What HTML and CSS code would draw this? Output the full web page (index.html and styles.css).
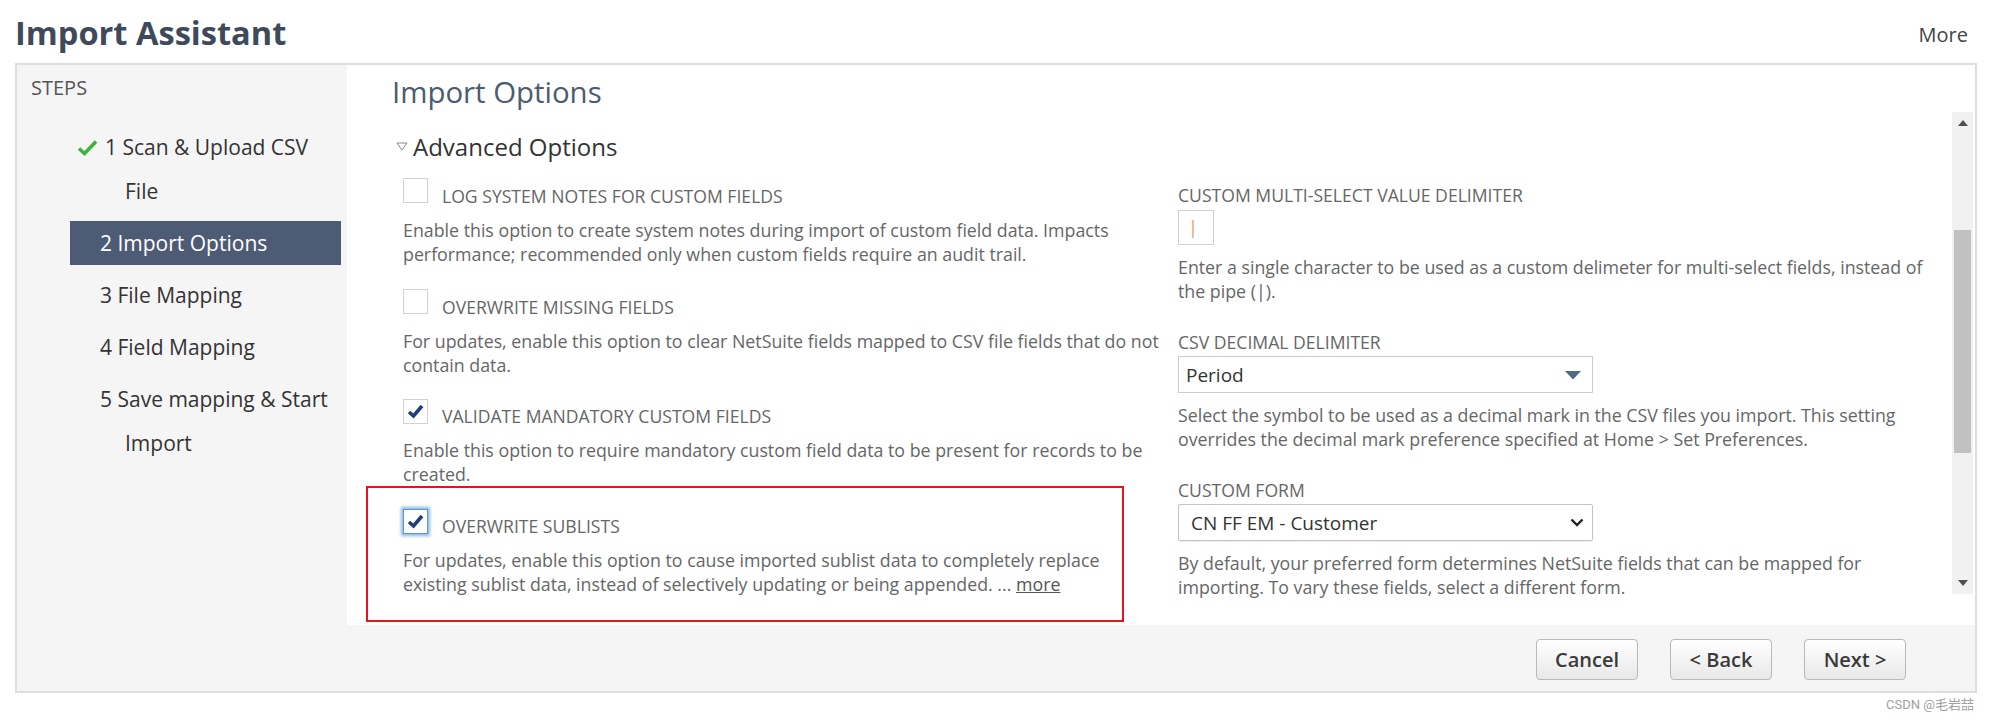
FILE: index.html
```html
<!DOCTYPE html>
<html lang="en">
<head>
<meta charset="utf-8">
<title>Import Assistant</title>
<link rel="stylesheet" href="styles.css">
</head>
<body>
<div class="header">
  <h1 class="title">Import Assistant</h1>
  <a class="more">More</a>
</div>
<div class="panel">
  <div class="panel-top">
    <aside class="sidebar">
      <div class="steps-title">STEPS</div>
      <ul class="steps">
        <li class="step"><svg class="step-check" width="21" height="17" viewBox="0 0 21 17"><path d="M2 9.5 L7.5 14.5 L19 2.5" fill="none" stroke="#3db43b" stroke-width="3.6"/></svg>1 Scan &amp; Upload CSV File</li>
        <li class="step active">2 Import Options</li>
        <li class="step">3 File Mapping</li>
        <li class="step">4 Field Mapping</li>
        <li class="step">5 Save mapping &amp; Start Import</li>
      </ul>
    </aside>
    <main class="main">
      <h2 class="page-heading">Import Options</h2>
      <div class="scroll-row">
        <div class="scroll-content">
          <div class="section-head"><svg class="tri" width="12" height="9" viewBox="0 0 12 9"><polygon points="1,1 11,1 6,8" fill="none" stroke="#8a8a8a" stroke-width="1"/></svg>Advanced Options</div>
          <div class="cols">
            <div class="col">
              <div class="opt">
                <div class="opt-row"><span class="cb"></span><span class="opt-label">LOG SYSTEM NOTES FOR CUSTOM FIELDS</span></div>
                <p class="desc">Enable this option to create system notes during import of custom field data. Impacts performance; recommended only when custom fields require an audit trail.</p>
              </div>
              <div class="opt">
                <div class="opt-row"><span class="cb"></span><span class="opt-label">OVERWRITE MISSING FIELDS</span></div>
                <p class="desc">For updates, enable this option to clear NetSuite fields mapped to CSV file fields that do not contain data.</p>
              </div>
              <div class="opt">
                <div class="opt-row"><span class="cb"><svg width="23" height="23" viewBox="0 0 23 23"><path d="M5 12 L9.5 16 L18 6" fill="none" stroke="#1f3f7c" stroke-width="3.6"/></svg></span><span class="opt-label">VALIDATE MANDATORY CUSTOM FIELDS</span></div>
                <p class="desc">Enable this option to require mandatory custom field data to be present for records to be created.</p>
              </div>
              <div class="opt">
                <div class="opt-row"><span class="cb cb-focus"><svg width="23" height="23" viewBox="0 0 23 23"><path d="M5 12 L9.5 16 L18 6" fill="none" stroke="#1f3f7c" stroke-width="3.6"/></svg></span><span class="opt-label">OVERWRITE SUBLISTS</span></div>
                <p class="desc">For updates, enable this option to cause imported sublist data to completely replace existing sublist data, instead of selectively updating or being appended. ... <a class="more-link">more</a></p>
              </div>
            </div>
            <div class="col col-right">
              <div class="field">
                <div class="field-label">CUSTOM MULTI-SELECT VALUE DELIMITER</div>
                <div class="text-input"><span class="pipe">|</span></div>
                <p class="desc">Enter a single character to be used as a custom delimeter for multi-select fields, instead of the pipe (|).</p>
              </div>
              <div class="field">
                <div class="field-label">CSV DECIMAL DELIMITER</div>
                <div class="select select-flat"><span>Period</span><svg width="18" height="10" viewBox="0 0 18 10"><path d="M1 1 L17 1 L9.5 9 Q9 9.5 8.5 9 Z" fill="#4e698b"/></svg></div>
                <p class="desc">Select the symbol to be used as a decimal mark in the CSV files you import. This setting overrides the decimal mark preference specified at Home &gt; Set Preferences.</p>
              </div>
              <div class="field">
                <div class="field-label">CUSTOM FORM</div>
                <div class="select select-native"><span>CN FF EM - Customer</span><svg width="14" height="9" viewBox="0 0 14 9"><path d="M1.5 1.5 L7 7 L12.5 1.5" fill="none" stroke="#222" stroke-width="2.4"/></svg></div>
                <p class="desc">By default, your preferred form determines NetSuite fields that can be mapped for importing. To vary these fields, select a different form.</p>
              </div>
            </div>
          </div>
        </div>
        <div class="scrollbar">
          <div class="sb-btn"><svg width="10" height="6" viewBox="0 0 10 6"><polygon points="0,6 10,6 5,0" fill="#505050"/></svg></div>
          <div class="sb-track"><div class="sb-thumb"></div></div>
          <div class="sb-btn"><svg width="10" height="6" viewBox="0 0 10 6"><polygon points="0,0 10,0 5,6" fill="#505050"/></svg></div>
        </div>
      </div>
    </main>
  </div>
  <div class="footer">
    <button class="btn">Cancel</button>
    <button class="btn">&lt; Back</button>
    <button class="btn">Next &gt;</button>
  </div>
  <div class="annot"></div>
</div>
<div class="watermark">CSDN @毛岩喆</div>
</body>
</html>
```
FILE: styles.css
```css
body {
  margin: 0;
  font-family: "Open Sans", "Noto Sans", sans-serif;
  background: #fff;
  color: #333;
}

.header {
  display: flex;
  justify-content: space-between;
  align-items: flex-start;
  height: 63px;
  padding: 11px 32px 0 15px;
  box-sizing: border-box;
}

.title {
  margin: 0;
  font-size: 32.6px;
  font-weight: 700;
  color: #3e4a5c;
  line-height: 44px;
}

.more {
  margin-top: 10px;
  font-size: 20px;
  color: #444;
}

.panel {
  position: relative;
  margin: 0 23px 0 15px;
  border: 2px solid #dedede;
  background: #f5f5f5;
}

.panel-top {
  display: flex;
  height: 560px;
}

.sidebar {
  width: 330px;
  flex: none;
  padding: 11px 0 0 14px;
  box-sizing: border-box;
}

.steps-title {
  font-size: 20px;
  color: #555;
  line-height: 24px;
}

.steps {
  list-style: none;
  margin: 25px 0 0 39px;
  padding: 0;
}

.step {
  width: 271px;
  box-sizing: border-box;
  padding: 0 6px 0 55px;
  text-indent: -25px;
  font-size: 21px;
  line-height: 44px;
  color: #333;
  margin-bottom: 8px;
}

.step.active {
  background: #4d5b75;
  color: #fff;
}

.step-check {
  margin-left: -23px;
  margin-right: 7px;
  vertical-align: -1px;
}

.main {
  flex: 1;
  background: #fff;
  display: flex;
  flex-direction: column;
  min-width: 0;
}

.page-heading {
  margin: 8px 0 0 45px;
  font-size: 29.4px;
  font-weight: 400;
  line-height: 38px;
  color: #4b5b70;
}

.scroll-row {
  display: flex;
  height: 487px;
}

.scroll-content {
  flex: 1;
  overflow: hidden;
  padding: 20px 10px 0 56px;
}

.section-head {
  margin: 0 0 16px -7px;
  font-size: 24px;
  line-height: 31px;
  color: #333;
}

.tri {
  margin-right: 5px;
  vertical-align: 5px;
}

.cols {
  display: grid;
  grid-template-columns: 762px 762px;
  column-gap: 13px;
}

.opt {
  margin-bottom: 22.5px;
}

.opt-row {
  display: flex;
  align-items: baseline;
}

.cb {
  display: inline-flex;
  align-items: center;
  justify-content: center;
  width: 25px;
  height: 25px;
  box-sizing: border-box;
  border: 1px solid #d2d2d2;
  background: #fff;
  flex: none;
}

.cb-focus {
  border-color: #5b98d4;
  box-shadow: 0 0 3px 2px #8bb8e6;
}

.opt-label {
  margin-left: 14px;
  font-size: 17.6px;
  line-height: 20px;
  color: #666;
}

.desc {
  margin: 12px 0 0;
  font-size: 17.8px;
  line-height: 24px;
  color: #666;
}

.more-link {
  color: #555;
  text-decoration: underline;
}

.col-right {
  padding-top: 7px;
}

.field {
  margin-bottom: 29px;
}

.field-label {
  font-size: 17.6px;
  line-height: 20px;
  color: #666;
}

.text-input {
  margin-top: 5px;
  width: 36px;
  height: 35px;
  box-sizing: border-box;
  border: 1px solid #cfcfcf;
  padding-left: 9px;
  font-size: 18px;
  line-height: 33px;
  color: #e0a060;
}

.field .desc {
  margin-top: 10px;
}

.select {
  margin-top: 4px;
  width: 415px;
  height: 37px;
  box-sizing: border-box;
  display: flex;
  align-items: center;
  justify-content: space-between;
  font-size: 19px;
  color: #333;
  background: #fff;
}

.select-flat {
  border: 1px solid #cccccc;
  padding: 0 10px 0 7px;
}

.select-native {
  border: 1px solid #c4c4c4;
  border-radius: 2px;
  box-shadow: 0 1px 1px rgba(0,0,0,0.08);
  padding: 0 8px 0 12px;
}

.scrollbar {
  width: 21px;
  flex: none;
  margin: 1px 2px 4px 4px;
  background: #f1f1f1;
  display: flex;
  flex-direction: column;
}

.sb-btn {
  height: 22px;
  display: flex;
  align-items: center;
  justify-content: center;
  flex: none;
}

.sb-track {
  flex: 1;
  padding: 96px 2px 0 2px;
}

.sb-thumb {
  height: 223px;
  background: #c1c1c1;
}

.footer {
  height: 66px;
  box-sizing: border-box;
  display: flex;
  justify-content: flex-end;
  align-items: flex-start;
  gap: 32px;
  padding: 14px 69px 0 0;
}

.btn {
  height: 41px;
  min-width: 102px;
  padding: 0 16px;
  border: 1px solid #b9b9b9;
  border-radius: 4px;
  background: linear-gradient(#ffffff, #e8e8e8);
  font-family: "Open Sans", sans-serif;
  font-size: 20px;
  font-weight: 600;
  color: #3a3a3a;
}

.annot {
  position: absolute;
  left: 349px;
  top: 421px;
  width: 758px;
  height: 136px;
  box-sizing: border-box;
  border: 2px solid #e8141b;
  pointer-events: none;
}

.watermark {
  margin-top: 2px;
  padding-right: 26px;
  text-align: right;
  font-family: "Roboto", "Noto Sans CJK SC", sans-serif;
  font-size: 13px;
  line-height: 20px;
  color: #a0a0a0;
}
```
